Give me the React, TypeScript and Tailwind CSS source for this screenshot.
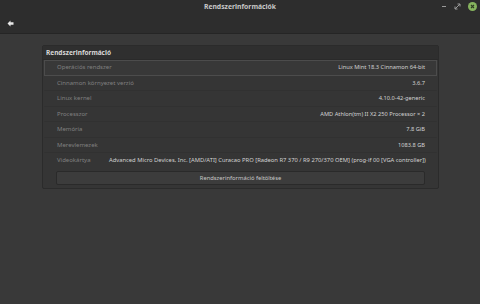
import React from "react";

const rows: [string, string][] = [
  ["Operációs rendszer", "Linux Mint 18.3 Cinnamon 64-bit"],
  ["Cinnamon környezet verzió", "3.6.7"],
  ["Linux kernel", "4.10.0-42-generic"],
  ["Processzor", "AMD Athlon(tm) II X2 250 Processor × 2"],
  ["Memória", "7.8 GiB"],
  ["Merevlemezek", "1083.8 GB"],
];

export default function App() {
  return (
    <div
      className="w-[480px] h-[304px] flex flex-col bg-[#393939] overflow-hidden"
      style={{ fontFamily: '"Noto Sans", "DejaVu Sans", sans-serif' }}
    >
      {/* Title bar + toolbar */}
      <div className="h-[34px] shrink-0 bg-[#2d2d2d] border-b border-[#252525] flex flex-col">
        <div className="h-[14px] flex items-center relative">
          <div className="flex-1 text-center text-[6.8px] font-bold text-[#c8c8c8] leading-none">
            Rendszerinformációk
          </div>
          <div className="absolute right-[3px] top-[2px] flex items-center gap-[7px]">
            <div className="w-[7px] h-[8px] flex items-center justify-center">
              <div className="w-[4px] h-[1px] bg-[#9a9a9a]" />
            </div>
            <svg width="7" height="7" viewBox="0 0 7 7">
              <path d="M1 6 L6 1 M3.5 1 H6 V3.5 M1 3.5 V6 H3.5" stroke="#9a9a9a" strokeWidth="1" fill="none" />
            </svg>
            <div className="w-[9px] h-[9px] rounded-full bg-[#86b35e] flex items-center justify-center">
              <svg width="5" height="5" viewBox="0 0 5 5">
                <path d="M1 1 L4 4 M4 1 L1 4" stroke="#2d3a22" strokeWidth="1.1" />
              </svg>
            </div>
          </div>
        </div>
        <div className="flex-1 flex items-center pl-[7px]">
          <svg width="7" height="7" viewBox="0 0 7 7">
            <path d="M0.5 3.5 L3.5 0.5 V2.3 H6.5 V4.7 H3.5 V6.5 Z" fill="#e8e8e8" />
          </svg>
        </div>
      </div>

      {/* Content */}
      <div className="pt-[11px] pl-[42px] pr-[41px]">
        <div className="border border-[#2b2b2b] bg-[#353535] rounded-[2px]">
          <div className="h-[14px] flex items-center px-[3px] bg-[#2f2f2f] border-b border-[#2a2a2a] text-[6.5px] font-bold text-[#d8d8d8] pt-[1px]">
            Rendszerinformáció
          </div>
          <div className="flex flex-col px-[1px]">
            {rows.map(([label, value], i) => (
              <div
                key={label}
                className={`h-[15.5px] flex items-center justify-between pl-[12px] pr-[11px] border ${
                  i === 0
                    ? "border-[#4c4c4c] bg-[#383838]"
                    : "border-transparent border-b-[#313131]"
                }`}
              >
                <span className="text-[#808080] text-[6px]">{label}</span>
                <span className="text-[#d2d2d2] text-[5.7px]">{value}</span>
              </div>
            ))}
            <div className="h-[15.5px] flex items-center pl-[12px] pr-[11px] border border-transparent">
              <span className="text-[#808080] text-[6px] w-[52px] shrink-0">Videokártya</span>
              <span className="text-[#d2d2d2] text-[5.8px] flex-1 text-right whitespace-nowrap">
                Advanced Micro Devices, Inc. [AMD/ATI] Curacao PRO [Radeon R7 370 / R9 270/370 OEM] (prog-if 00 [VGA controller])
              </span>
            </div>
            <div className="px-[12px] pt-[2.5px] pb-[3px]">
              <div className="h-[14px] flex items-center justify-center border border-[#2a2a2a] bg-[#3c3c3c] rounded-[2px] text-[5.8px] text-[#c8c8c8]">
                Rendszerinformáció feltöltése
              </div>
            </div>
          </div>
        </div>
      </div>
    </div>
  );
}
